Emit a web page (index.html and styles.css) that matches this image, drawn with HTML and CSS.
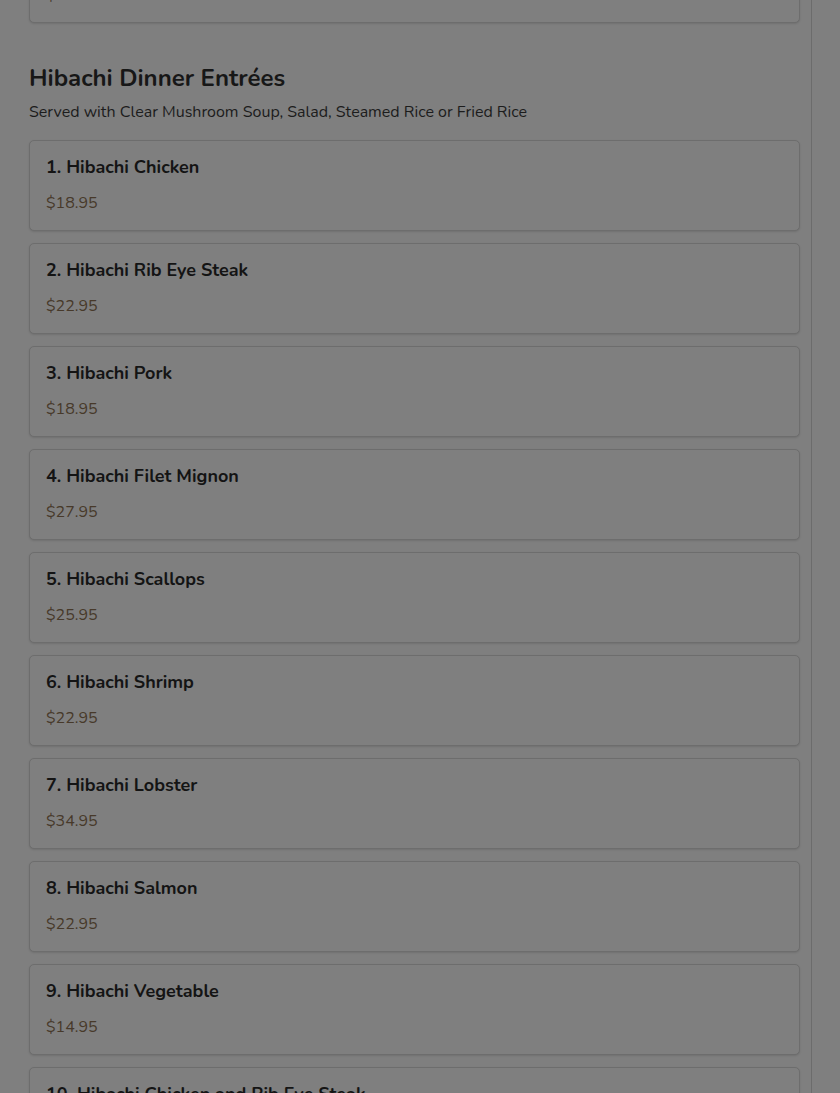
FILE: index.html
```html
<!DOCTYPE html>
<html lang="en">
<head>
<meta charset="utf-8">
<title>Hibachi Dinner Entrées</title>
<link rel="stylesheet" href="styles.css">
</head>
<body>
<div class="page">
  <main class="column">
    <div class="card card-prev">
      <div class="item-name">Hibachi Appetizer</div>
      <div class="item-price">$9.95</div>
    </div>

    <section class="section">
      <h2 class="section-title">Hibachi Dinner Entrées</h2>
      <p class="section-desc">Served with Clear Mushroom Soup, Salad, Steamed Rice or Fried Rice</p>

      <div class="list">
        <div class="card"><div class="item-name">1. Hibachi Chicken</div><div class="item-price">$18.95</div></div>
        <div class="card"><div class="item-name">2. Hibachi Rib Eye Steak</div><div class="item-price">$22.95</div></div>
        <div class="card"><div class="item-name">3. Hibachi Pork</div><div class="item-price">$18.95</div></div>
        <div class="card"><div class="item-name">4. Hibachi Filet Mignon</div><div class="item-price">$27.95</div></div>
        <div class="card"><div class="item-name">5. Hibachi Scallops</div><div class="item-price">$25.95</div></div>
        <div class="card"><div class="item-name">6. Hibachi Shrimp</div><div class="item-price">$22.95</div></div>
        <div class="card"><div class="item-name">7. Hibachi Lobster</div><div class="item-price">$34.95</div></div>
        <div class="card"><div class="item-name">8. Hibachi Salmon</div><div class="item-price">$22.95</div></div>
        <div class="card"><div class="item-name">9. Hibachi Vegetable</div><div class="item-price">$14.95</div></div>
        <div class="card"><div class="item-name">10. Hibachi Chicken and Rib Eye Steak</div><div class="item-price">$29.95</div></div>
      </div>
    </section>
  </main>
</div>
</body>
</html>
```

FILE: styles.css
```css
html, body {
  margin: 0;
  padding: 0;
  background: #7f7f7f;
  overflow: hidden;
}

body {
  font-family: "Nunito", "Lato", "Noto Sans", sans-serif;
  color: #141414;
}

.page {
  display: flex;
  height: 1093px;
  overflow: hidden;
}

.column {
  width: 771px;
  flex: none;
  padding: 0 11px 0 29px;
  border-right: 1px solid #6c6c6c;
  margin-top: -68px;
}

.card {
  box-sizing: border-box;
  height: 91px;
  border: 1px solid #6d6d6d;
  border-radius: 5px;
  padding: 14px 16px 15px;
  background: #7f7f7f;
  box-shadow: 0 1px 2px rgba(0, 0, 0, 0.12);
}

.item-name {
  font-size: 18px;
  line-height: 24px;
  font-weight: 700;
  color: #141414;
}

.item-price {
  margin-top: 12px;
  font-size: 16px;
  line-height: 24px;
  color: #47392a;
}

.section {
  padding-top: 39px;
}

.section-title {
  margin: 0;
  font-size: 24px;
  line-height: 32px;
  font-weight: 700;
  color: #171717;
}

.section-desc {
  margin: 6px 0 16px;
  font-size: 16px;
  line-height: 24px;
  color: #1c1c1c;
}

.list {
  display: flex;
  flex-direction: column;
  gap: 12px;
}
```
